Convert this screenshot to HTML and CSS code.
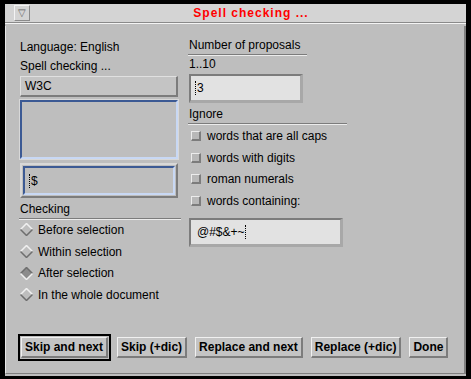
FILE: index.html
```html
<!DOCTYPE html>
<html lang="en">
<head>
  <meta charset="UTF-8" />
  <title>Spell checking ...</title>
  <link rel="stylesheet" href="styles.css">
</head>
<body>
  <div class="frame">
    <div class="titlebar">
      <span class="menu-btn">▽</span>
      <span class="title">Spell checking ...</span>
    </div>
    <div class="panel">
      <div class="columns">
        <div class="col left">
          <div class="text">Language: English</div>
          <div class="text">Spell checking ...</div>
          <div class="field raised">W3C</div>
          <div class="listbox"></div>
          <div class="entry-wrap">
            <div class="entry"><span class="cursor"></span>$</div>
          </div>
          <div class="group-label">Checking</div>
          <div class="radio"><svg width="13" height="13" viewBox="0 0 13 13"><polygon points="6.5,0.5 12.5,6.5 6.5,12.5 0.5,6.5" fill="#bebebe"/><polyline points="0.5,6.5 6.5,0.5 12.5,6.5" fill="none" stroke="#f0f0f0" stroke-width="1.5"/><polyline points="0.5,6.5 6.5,12.5 12.5,6.5" fill="none" stroke="#6e6e6e" stroke-width="1.5"/></svg>Before selection</div>
          <div class="radio"><svg width="13" height="13" viewBox="0 0 13 13"><polygon points="6.5,0.5 12.5,6.5 6.5,12.5 0.5,6.5" fill="#bebebe"/><polyline points="0.5,6.5 6.5,0.5 12.5,6.5" fill="none" stroke="#f0f0f0" stroke-width="1.5"/><polyline points="0.5,6.5 6.5,12.5 12.5,6.5" fill="none" stroke="#6e6e6e" stroke-width="1.5"/></svg>Within selection</div>
          <div class="radio"><svg width="13" height="13" viewBox="0 0 13 13"><polygon points="6.5,0.5 12.5,6.5 6.5,12.5 0.5,6.5" fill="#8c8c8c"/><polyline points="0.5,6.5 6.5,0.5 12.5,6.5" fill="none" stroke="#6e6e6e" stroke-width="1.5"/><polyline points="0.5,6.5 6.5,12.5 12.5,6.5" fill="none" stroke="#f0f0f0" stroke-width="1.5"/></svg>After selection</div>
          <div class="radio"><svg width="13" height="13" viewBox="0 0 13 13"><polygon points="6.5,0.5 12.5,6.5 6.5,12.5 0.5,6.5" fill="#bebebe"/><polyline points="0.5,6.5 6.5,0.5 12.5,6.5" fill="none" stroke="#f0f0f0" stroke-width="1.5"/><polyline points="0.5,6.5 6.5,12.5 12.5,6.5" fill="none" stroke="#6e6e6e" stroke-width="1.5"/></svg>In the whole document</div>
        </div>
        <div class="col right">
          <div class="group-label wide1">Number of proposals</div>
          <div class="text">1..10</div>
          <div class="field sunken small"><span class="cursor"></span>3</div>
          <div class="group-label ignore">Ignore</div>
          <div class="check"><span class="box"></span>words that are all caps</div>
          <div class="check"><span class="box"></span>words with digits</div>
          <div class="check"><span class="box"></span>roman numerals</div>
          <div class="check"><span class="box"></span>words containing:</div>
          <div class="field sunken chars">@#$&amp;+~<span class="cursor"></span></div>
        </div>
      </div>
      <div class="buttons">
        <div class="default"><button class="btn">Skip and next</button></div>
        <button class="btn">Skip (+dic)</button>
        <button class="btn">Replace and next</button>
        <button class="btn">Replace (+dic)</button>
        <button class="btn">Done</button>
      </div>
    </div>
  </div>
</body>
</html>
```

FILE: styles.css
```css
body {
  margin: 0;
  width: 471px;
  height: 379px;
  background: #000;
  font-family: "Liberation Sans", Arial, sans-serif;
  font-size: 12px;
  color: #000;
  overflow: hidden;
}

.frame {
  margin: 4px 5px 0 5px;
  height: 372px;
  display: flex;
  flex-direction: column;
  background: #bebebe;
}

.titlebar {
  height: 18px;
  background: #d4d4d4;
  border-bottom: 1px solid #8a8a8a;
  box-shadow: 0 1px 0 #f4f4f4;
  display: flex;
  align-items: center;
}

.menu-btn {
  margin-left: 9px;
  width: 14px;
  height: 14px;
  border: 1px solid #f4f4f4;
  border-right-color: #8a8a8a;
  border-bottom-color: #8a8a8a;
  font-size: 10px;
  line-height: 14px;
  text-align: center;
  color: #606060;
}

.title {
  flex: 1;
  text-align: center;
  margin-left: 6px;
  color: #f00;
  font-weight: bold;
  font-size: 12px;
  letter-spacing: 1px;
}

.panel {
  flex: 1;
  margin-top: 3px;
  border-left: 1px solid #e8e8e8;
  border-right: 2px solid #808080;
  border-bottom: 1px solid #808080;
  margin-bottom: 2px;
  display: flex;
  flex-direction: column;
  padding: 12px 0 0 14px;
}

.columns {
  display: flex;
  gap: 11px;
}

.col {
  display: flex;
  flex-direction: column;
}

.left {
  width: 158px;
}

.right {
  width: 157px;
}

.text {
  height: 19px;
  line-height: 19px;
}

.field {
  box-sizing: border-box;
  padding-left: 4px;
  display: flex;
  align-items: center;
}

.raised {
  height: 21px;
  background: #c4c4c4;
  border: 2px solid #e0e0e0;
  border-right-color: #7c7c7c;
  border-bottom-color: #7c7c7c;
  border-top-width: 1px;
  border-left-width: 1px;
}

.sunken {
  background: #e2e2e2;
  border: 2px solid #7c7c7c;
  border-right-color: #a8a8a8;
  border-bottom-color: #a8a8a8;
  border-right-width: 3px;
  border-bottom-width: 3px;
}

.listbox {
  margin-top: 3px;
  height: 59px;
  box-sizing: border-box;
  border: 2px solid #3c5a94;
  border-right-color: #c8d8f4;
  border-bottom-color: #c8d8f4;
  box-shadow: 0 0 0 1px #d8d8d8;
}

.entry-wrap {
  margin-top: 4px;
  height: 35px;
  box-sizing: border-box;
  border: 2px solid #d8d8d8;
  border-right-color: #7c7c7c;
  border-bottom-color: #7c7c7c;
  padding: 1px;
}

.entry {
  height: 100%;
  box-sizing: border-box;
  border: 2px solid #3c5a94;
  border-right-color: #c8d8f4;
  border-bottom-color: #c8d8f4;
  display: flex;
  align-items: center;
  padding-left: 4px;
}

.cursor {
  display: inline-block;
  width: 0;
  height: 14px;
  border-left: 1px dotted #000;
  margin-right: 1px;
}

.group-label {
  height: 16px;
  line-height: 15px;
  border-bottom: 1px solid #7c7c7c;
  box-shadow: 0 1px 0 #ececec;
  margin-top: 4px;
  margin-bottom: 0;
  margin-left: -1px;
  padding-left: 1px;
}

.left .group-label {
  width: 161px;
}

.wide1 {
  margin-top: 0;
  width: 118px;
}

.radio {
  height: 21.7px;
  display: flex;
  align-items: center;
  gap: 5px;
}

.small {
  margin-top: 0;
  width: 114px;
  height: 29px;
}

.ignore {
  width: 158px;
  margin-top: 4px;
  margin-bottom: 1px;
}

.check {
  height: 21.7px;
  display: flex;
  align-items: center;
  gap: 6px;
  margin-left: 2px;
}

.box {
  width: 10px;
  height: 10px;
  box-sizing: border-box;
  background: #b8b8b8;
  border: 1px solid #ececec;
  border-right: 2px solid #7c7c7c;
  border-bottom: 2px solid #7c7c7c;
}

.chars {
  margin-top: 6px;
  width: 154px;
  height: 29px;
  padding-left: 6px;
}

.buttons {
  margin-top: auto;
  margin-bottom: 12px;
  display: flex;
  align-items: center;
  gap: 8px;
  margin-left: -2px;
}

.default {
  border: 2px solid #000;
  padding: 1px;
  margin-right: -2px;
}

.btn {
  font-family: "Liberation Sans", Arial, sans-serif;
  font-size: 12px;
  font-weight: bold;
  height: 21px;
  padding: 0 3px;
  background: #c4c4c4;
  border: 2px solid #7c7c7c;
  border-top: 1px solid #f0f0f0;
  border-left: 1px solid #f0f0f0;
  color: #000;
  display: block;
}
```
